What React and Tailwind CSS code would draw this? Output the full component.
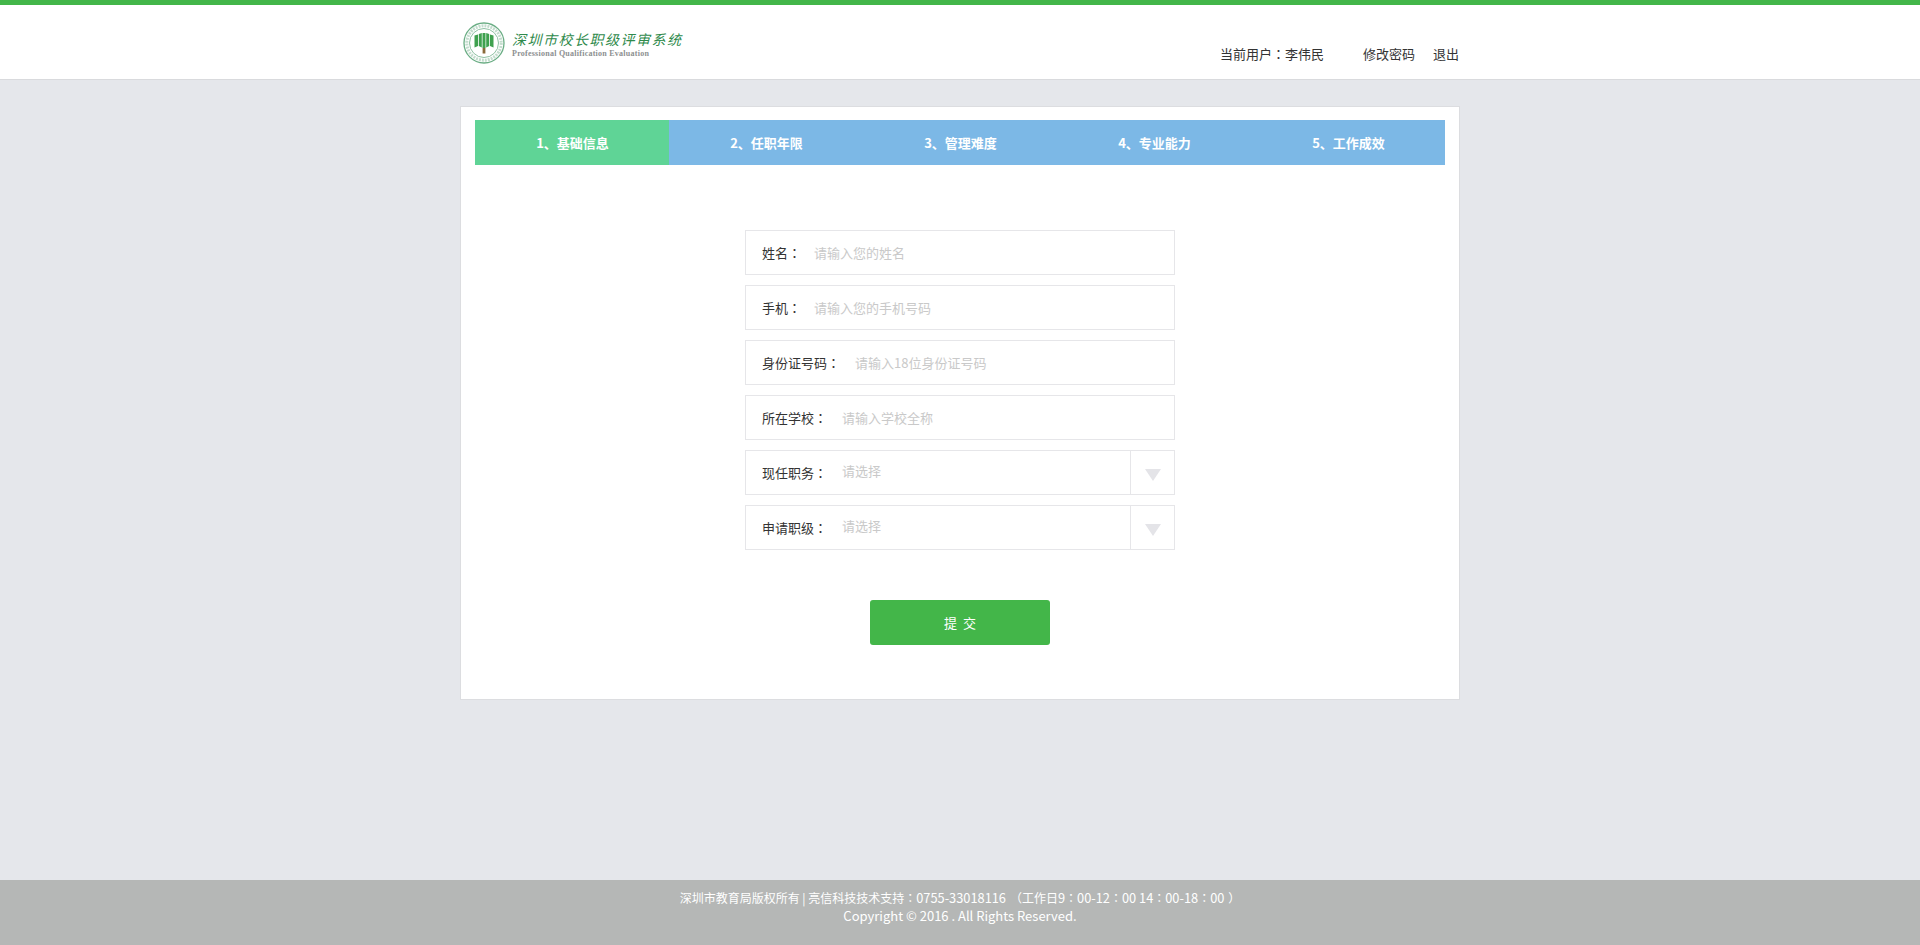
const font = { fontFamily: '"Noto Sans CJK SC", "Noto Sans", sans-serif' };
const tc = { fontFamily: '"Noto Sans CJK TC", sans-serif' };

function Logo() {
  return (
    <div className="flex items-center gap-[7px]">
      <svg width="42" height="42" viewBox="0 0 42 42" fill="none">
        <circle cx="21" cy="21" r="20" stroke="#6aad84" strokeWidth="1.300" />
        <circle cx="21" cy="21" r="14.500" stroke="#8fc1a3" strokeWidth="1" />
        <circle cx="21" cy="21" r="17.200" stroke="#c3dccd" strokeWidth="3" strokeDasharray="2 1" />
        <path d="M11.500 13.500l3.500-1v11.500l-3.500 1.500zM15.800 12l3-1v14.500l-3-1.500zM19.500 11h3v15h-3zM23.200 11l3 1v12l-3 1.500zM27 12.500l3.500 1V25.500L27 24z" fill="#3fa14f" />
        <rect x="19.600" y="26" width="2.800" height="5.500" fill="#8a6a3a" />
      </svg>
      <div className="mt-[3px] flex flex-col">
        <span className="text-[14px] leading-[18px] tracking-[1.5px] italic text-[#2f8a4c] whitespace-nowrap">深圳市校长职级评审系统</span>
        <span className="mt-[1px] text-[8px] leading-[10px] font-bold text-[#8d9091] whitespace-nowrap tracking-[0.25px]" style={{ fontFamily: '"Liberation Serif", serif' }}>Professional Qualification Evaluation</span>
      </div>
    </div>
  );
}

const tabs = ["1、基础信息", "2、任职年限", "3、管理难度", "4、专业能力", "5、工作成效"];

function Row({ label, placeholder, gap, select }) {
  return (
    <div className="flex h-[45px] border border-[#e6e6e9] bg-white">
      <div className={`flex flex-1 pl-4 text-[13px] ${select ? "" : "items-center"}`}>
        <span className={`text-[#333333] whitespace-nowrap ${select ? "leading-[43px]" : ""}`} style={{ marginRight: gap }}>{label}<span style={tc}>：</span></span>
        <span className={`text-[#c9c9c9] whitespace-nowrap ${select ? "leading-[40px]" : ""}`}>{placeholder}</span>
      </div>
      {select && (
        <div className="flex w-11 items-center justify-center border-l border-[#e6e6e9] pt-1">
          <svg width="16" height="12" viewBox="0 0 16 12"><path d="M0 0h16L8 12z" fill="#e4e4e8" /></svg>
        </div>
      )}
    </div>
  );
}

const Num = ({ children }) => <span className="text-[12.800px]">{children}</span>;
const C = ({ children }) => <span style={tc}>{children}</span>;

export default function App() {
  return (
    <div className="flex min-h-[945px] flex-col bg-[#e5e7eb]" style={font}>
      <header className="h-20 border-t-[5px] border-b border-t-[#43b649] border-b-[#d9dadd] bg-white">
        <div className="mx-auto flex h-[74px] w-[1000px] justify-between">
          <div className="pl-[3px] pt-[17px]"><Logo /></div>
          <div className="flex pt-[39px] text-[13px] leading-5 text-[#333333]">
            <span>当前用户<span style={tc}>：</span>李伟民</span>
            <span className="ml-[39px]">修改密码</span>
            <span className="ml-[18px] mr-[1px]">退出</span>
          </div>
        </div>
      </header>
      <main className="flex-1 pt-[26px]">
        <div className="mx-auto h-[594px] w-[1000px] border border-[#dcdde0] bg-white px-[14px] pt-[13px]">
          <div className="flex h-[45px] bg-[#7cb8e6]">
            {tabs.map((t, i) => (
              <div key={t} className={`flex h-full flex-1 items-center justify-center pl-[1px] text-[13px] font-bold text-white ${i === 0 ? "bg-[#5fd496]" : ""}`}>{t}</div>
            ))}
          </div>
          <div className="mx-auto mt-[65px] flex w-[430px] flex-col gap-[10px]">
            <Row label="姓名" placeholder="请输入您的姓名" gap="13px" />
            <Row label="手机" placeholder="请输入您的手机号码" gap="13px" />
            <Row label="身份证号码" placeholder="请输入18位身份证号码" gap="15px" />
            <Row label="所在学校" placeholder="请输入学校全称" gap="15px" />
            <Row label="现任职务" placeholder="请选择" gap="15px" select />
            <Row label="申请职级" placeholder="请选择" gap="15px" select />
          </div>
          <button className="mx-auto mt-[50px] block h-[45px] w-[180px] rounded-[3px] bg-[#43b649] text-[13px] text-white">提&nbsp;&nbsp;交</button>
        </div>
      </main>
      <footer className="h-[65px] bg-[#b5b7b6] pt-[9px] text-center text-[12px] leading-[18px] text-white">
        <p>深圳市教育局版权所有 | 亮信科技技术支持<C>：</C><Num>0755-33018116</Num><span className="ml-[4px]" style={tc}>（</span>工作日<Num>9</Num><C>：</C><Num>00-12</Num><C>：</C><Num>00 14</Num><C>：</C><Num>00-18</Num><C>：</C><Num>00</Num><span className="ml-[4px]" style={tc}>）</span></p>
        <p className="text-[13px]">Copyright © 2016 . All Rights Reserved.</p>
      </footer>
    </div>
  );
}
